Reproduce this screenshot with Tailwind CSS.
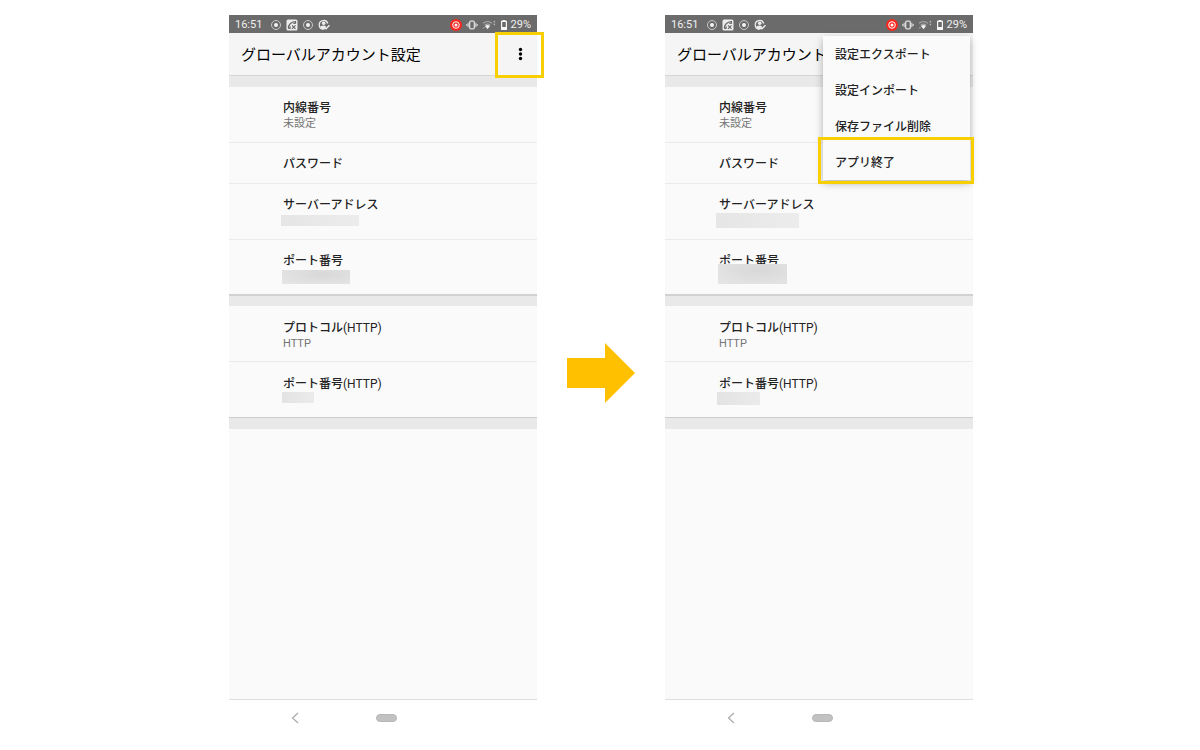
<!DOCTYPE html>
<html lang="ja">
<head>
<meta charset="utf-8">
<meta name="viewport" content="width=device-width, initial-scale=1">
<title>グローバルアカウント設定</title>
<script src="https://cdn.jsdelivr.net/npm/@tailwindcss/browser@4"></script>
</head>
<body class="bg-white font-['Roboto','Noto_Sans_CJK_JP',sans-serif] text-[#222222]">
<svg class="hidden" aria-hidden="true">
  <symbol id="target" viewBox="0 0 12 12"><circle cx="6" cy="6" r="4.500" fill="none" stroke="#c8c8c8" stroke-width="1"/><circle cx="6" cy="6" r="2" fill="#f2f2f2"/></symbol>
  <symbol id="call" viewBox="0 0 12 12"><rect x="0.5" y="0.5" width="11" height="11" rx="1.5" fill="#ededed"/><path d="M2.500 9.500C2.200 5.500 5 3 9.500 2.700V4.300L7.300 4.500M2.500 9.500H4L4.300 7.500" fill="none" stroke="#666" stroke-width="1.200"/><path d="M6 6.300L9.500 9.800M9.500 6.300L6 9.800" stroke="#666" stroke-width="1.100"/></symbol>
  <symbol id="account" viewBox="0 0 12 12"><path d="M9.800 4.500A4.400 4.400 0 1 0 5.500 10.300" fill="none" stroke="#ededed" stroke-width="1.300"/><circle cx="5.700" cy="4.200" r="1.800" fill="#ededed"/><path d="M2 7.800Q5.500 5.500 8 7.300L6.500 10.500L4 10.200Z" fill="#ededed"/><path d="M6.500 8.300L8 9.800L11.500 6.300" fill="none" stroke="#ededed" stroke-width="1.500"/></symbol>
  <symbol id="record" viewBox="0 0 12 12"><circle cx="6" cy="6" r="6" fill="#f5281f"/><circle cx="6" cy="6" r="3.300" fill="none" stroke="#fff" stroke-width="1"/><circle cx="6" cy="6" r="1.500" fill="#fff"/></symbol>
  <symbol id="vibrate" viewBox="0 0 12 12"><rect x="3.700" y="2.200" width="4.600" height="7.600" rx="1" fill="none" stroke="#ddd" stroke-width="1.300"/><path d="M2.200 3.800V8.200M9.800 3.800V8.200M.8 5V7M11.200 5V7" stroke="#ccc" stroke-width="1.200"/></symbol>
  <symbol id="wifi" viewBox="0 0 14 12"><path d="M1 4.300Q5.500 .8 10 4.300M2.700 6.300Q5.500 4 8.300 6.300" fill="none" stroke="#aaa" stroke-width="1.100"/><path d="M3 7Q5.500 5.200 8 7L5.500 10.300Z" fill="#f2f2f2"/><path d="M1 9.500L2.500 8" stroke="#bbb"/><path d="M11.300 3.300L12.300 1.500L13.300 3.300ZM11.300 4.700L12.300 6.500L13.300 4.700Z" fill="#ccc"/></symbol>
  <symbol id="battery" viewBox="0 0 8 12"><path d="M1.600 2.300H6.400V10.300H1.600Z" fill="none" stroke="#f5f5f5" stroke-width="1.200"/><path d="M2.600 1H5.400V2.500H2.600ZM1.500 8H6.500V10.500H1.500Z" fill="#f5f5f5"/></symbol>
</svg>

<main class="flex min-h-screen items-start justify-center pt-[15px] pl-0.5">
  <div class="flex items-center gap-[30px]">

    <section class="flex min-h-[716px] w-[308px] flex-col bg-[#fafafa]">
      <div class="flex h-[18px] items-center bg-[#6b6b6b] px-1.5 pt-0.5 text-[11px] text-[#f0f0f0]">
        <time>16:51</time>
        <span class="ml-2 flex gap-1"><svg class="size-3"><use href="#target"/></svg><svg class="size-3"><use href="#call"/></svg><svg class="size-3"><use href="#target"/></svg><svg class="size-3"><use href="#account"/></svg></span>
        <span class="ml-auto flex items-center gap-1"><svg class="size-3"><use href="#record"/></svg><svg class="size-3"><use href="#vibrate"/></svg><svg class="h-3 w-3.5"><use href="#wifi"/></svg><svg class="h-3 w-2"><use href="#battery"/></svg></span>
        <span class="ml-[3px]">29%</span>
      </div>
      <header class="relative flex h-[43px] items-center border-b border-[#d6d6d6] bg-[#f5f5f5] pt-0.5 pl-3">
        <h1 class="text-[15px] leading-5 font-normal whitespace-nowrap text-black">グローバルアカウント設定</h1>
        <button type="button" aria-label="メニュー" class="absolute top-[-1px] right-[-7px] flex h-[46px] w-[49px] items-center justify-center border-3 border-[#f8cf00]">
          <svg class="h-4 w-1.5" viewBox="0 0 6 16"><circle cx="3.500" cy="2.500" r="1.700"/><circle cx="3.500" cy="7" r="1.700"/><circle cx="3.500" cy="11.500" r="1.700"/></svg>
        </button>
      </header>
      <div class="h-[11px] bg-[#e9e9e9]"></div>
      <dl class="text-xs leading-4 font-medium">
        <div class="h-14 border-b border-[#ebebeb] pt-[13px] pl-[54px]"><dt>内線番号</dt><dd class="text-[11px] font-normal text-[#757575]">未設定</dd></div>
        <div class="h-[41px] border-b border-[#ebebeb] pt-[13px] pl-[54px]"><dt>パスワード</dt></div>
        <div class="h-14 border-b border-[#ebebeb] pt-[13px] pl-[54px]"><dt>サーバーアドレス</dt><dd class="mt-0.5 -ml-0.5 h-[11px] w-[78px] bg-linear-to-r from-[#e6e6e6] to-[#ececec]"></dd></div>
        <div class="h-14 border-b-2 border-[#d2d2d2] pt-[13px] pl-[54px]"><dt>ポート番号</dt><dd class="mt-px -ml-px h-3.5 w-[68px] bg-radial-[at_60%_30%] from-[#d8d8d8] to-[#e6e6e6]"></dd></div>
      </dl>
      <div class="h-[10px] bg-[#e9e9e9]"></div>
      <dl class="text-xs leading-4 font-medium">
        <div class="h-14 border-b border-[#ebebeb] pt-3.5 pl-[54px]"><dt>プロトコル<span class="font-normal">(HTTP)</span></dt><dd class="text-[11px] font-normal text-[#757575]">HTTP</dd></div>
        <div class="h-14 border-b border-[#cccccc] pt-3.5 pl-[54px]"><dt>ポート番号<span class="font-normal">(HTTP)</span></dt><dd class="-ml-px h-[11px] w-8 bg-linear-to-r from-[#e3e3e3] to-[#ebebeb]"></dd></div>
      </dl>
      <div class="h-[11px] bg-[#e9e9e9]"></div>
      <nav class="mt-auto flex h-8 items-center border-t border-[#dedede] bg-white pl-[62px]">
        <button type="button" aria-label="戻る" class="mt-1"><svg class="h-3 w-2" viewBox="0 0 8 12"><path d="M7 1L1.500 6L7 11" fill="none" stroke="#aaa" stroke-width="1.200"/></svg></button>
        <button type="button" aria-label="ホーム" class="mt-1 ml-[77px] h-2 w-[21px] rounded-full border border-[#b8b8b8] bg-[#c2c2c2]"></button>
      </nav>
    </section>

    <svg class="h-[60px] w-[68px] shrink-0" viewBox="0 0 68 60" aria-hidden="true"><path d="M0 15H38V0L68 30L38 60V45H0Z" fill="#ffc000"/></svg>

    <section class="relative flex min-h-[716px] w-[308px] flex-col bg-[#fafafa]">
      <div class="flex h-[18px] items-center bg-[#6b6b6b] px-1.5 pt-0.5 text-[11px] text-[#f0f0f0]">
        <time>16:51</time>
        <span class="ml-2 flex gap-1"><svg class="size-3"><use href="#target"/></svg><svg class="size-3"><use href="#call"/></svg><svg class="size-3"><use href="#target"/></svg><svg class="size-3"><use href="#account"/></svg></span>
        <span class="ml-auto flex items-center gap-1"><svg class="size-3"><use href="#record"/></svg><svg class="size-3"><use href="#vibrate"/></svg><svg class="h-3 w-3.5"><use href="#wifi"/></svg><svg class="h-3 w-2"><use href="#battery"/></svg></span>
        <span class="ml-[3px]">29%</span>
      </div>
      <header class="flex h-[43px] items-center border-b border-[#d6d6d6] bg-[#f5f5f5] pt-0.5 pl-3">
        <h1 class="text-[15px] leading-5 font-normal whitespace-nowrap text-black">グローバルアカウント</h1>
      </header>
      <div class="h-[11px] bg-[#e9e9e9]"></div>
      <dl class="text-xs leading-4 font-medium">
        <div class="h-14 border-b border-[#ebebeb] pt-[13px] pl-[54px]"><dt>内線番号</dt><dd class="text-[11px] font-normal text-[#757575]">未設定</dd></div>
        <div class="h-[41px] border-b border-[#ebebeb] pt-[13px] pl-[54px]"><dt>パスワード</dt></div>
        <div class="h-14 border-b border-[#ebebeb] pt-[13px] pl-[54px]"><dt>サーバーアドレス</dt><dd class="-ml-[3px] h-[15px] w-[83px] bg-linear-to-r from-[#e6e6e6] to-[#ececec]"></dd></div>
        <div class="h-14 border-b-2 border-[#d2d2d2] pt-[13px] pl-[54px]"><dt class="h-[11px]">ポート番号</dt><dd class="relative -ml-px h-5 w-[69px] bg-radial-[at_60%_30%] from-[#d8d8d8] to-[#e6e6e6]"></dd></div>
      </dl>
      <div class="h-[10px] bg-[#e9e9e9]"></div>
      <dl class="text-xs leading-4 font-medium">
        <div class="h-14 border-b border-[#ebebeb] pt-3.5 pl-[54px]"><dt>プロトコル<span class="font-normal">(HTTP)</span></dt><dd class="text-[11px] font-normal text-[#757575]">HTTP</dd></div>
        <div class="h-14 border-b border-[#cccccc] pt-3.5 pl-[54px]"><dt>ポート番号<span class="font-normal">(HTTP)</span></dt><dd class="-ml-0.5 h-[13px] w-[43px] bg-linear-to-r from-[#e3e3e3] to-[#ebebeb]"></dd></div>
      </dl>
      <div class="h-[11px] bg-[#e9e9e9]"></div>
      <nav class="mt-auto flex h-8 items-center border-t border-[#dedede] bg-white pl-[62px]">
        <button type="button" aria-label="戻る" class="mt-1"><svg class="h-3 w-2" viewBox="0 0 8 12"><path d="M7 1L1.500 6L7 11" fill="none" stroke="#aaa" stroke-width="1.200"/></svg></button>
        <button type="button" aria-label="ホーム" class="mt-1 ml-[77px] h-2 w-[21px] rounded-full border border-[#b8b8b8] bg-[#c2c2c2]"></button>
      </nav>

      <div role="menu" class="absolute top-[21px] right-[3px] flex w-[147px] flex-col bg-[#fafafa] text-xs font-medium shadow-[0_3px_8px_rgba(0,0,0,0.3)]">
        <button type="button" role="menuitem" class="h-9 pt-0.5 pl-3 text-left">設定エクスポート</button>
        <button type="button" role="menuitem" class="h-9 pt-0.5 pl-3 text-left">設定インポート</button>
        <button type="button" role="menuitem" class="h-9 pt-0.5 pl-3 text-left">保存ファイル削除</button>
        <button type="button" role="menuitem" class="relative h-9 pt-0.5 pl-3 text-left">アプリ終了<span class="absolute -top-[7px] -right-1 -bottom-1 -left-[5px] border-3 border-[#f8cf00]"></span></button>
      </div>
    </section>
  </div>
</main>
</body>
</html>
